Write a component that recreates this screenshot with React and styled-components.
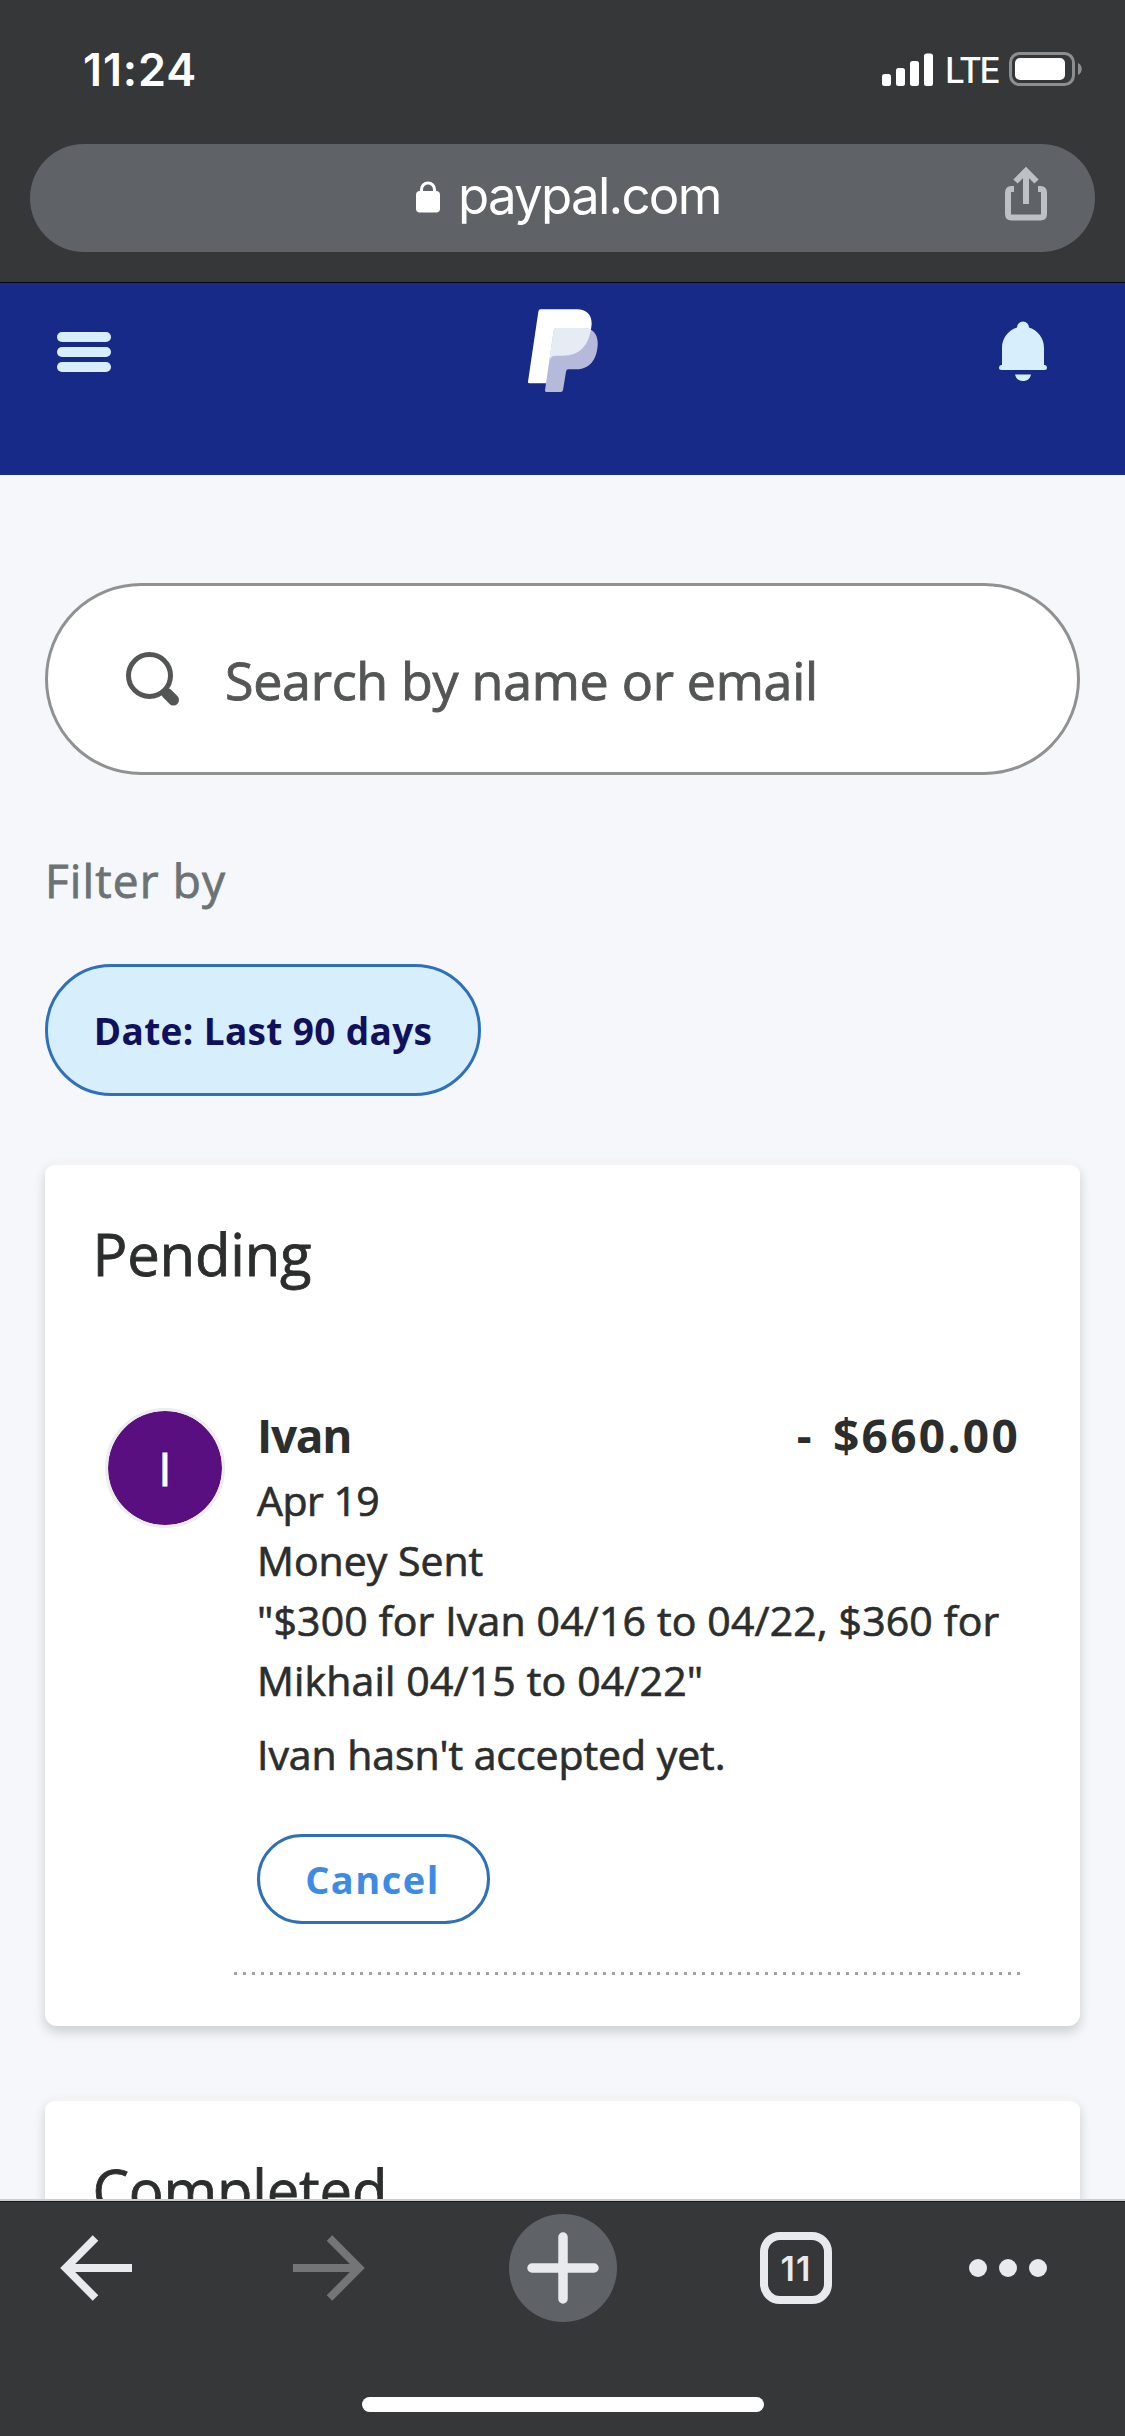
import React from "react";
import styled, { createGlobalStyle } from "styled-components";

const GlobalStyle = createGlobalStyle`
  * { box-sizing: border-box; }
  html, body { margin: 0; padding: 0; background: #363739; }
  button { font: inherit; cursor: pointer; }
  h2, p { margin: 0; font-weight: 400; }
  svg { display: block; flex: none; }
`;

const brandFont = `"Open Sans", "Noto Sans", sans-serif`;
const systemFont = `Inter, Roboto, sans-serif`;

const Screen = styled.div`
  width: 1125px;
  height: 2436px;
  display: flex;
  flex-direction: column;
  overflow: hidden;
  background: #f5f7fb;
  font-family: ${brandFont};
  color: #2c2e2d;
`;

const BrowserTop = styled.header`
  flex: none;
  height: 283px;
  background: #363739;
  border-bottom: 1px solid #05070f;
  font-family: ${systemFont};
  color: #fff;
`;

const StatusBar = styled.div`
  height: 138px;
  padding: 0 43px 0 83px;
  display: flex;
  align-items: center;
`;

const Clock = styled.span`
  margin-right: auto;
  font-size: 45px;
  font-weight: 600;
  letter-spacing: 0.9px;
`;

const Network = styled.span`
  width: 76px;
  padding: 2px 0 0 1px;
  text-align: center;
  font-size: 35px;
  font-weight: 500;
  letter-spacing: -2.4px;
`;

const AddressBar = styled.div`
  height: 108px;
  margin: 6px 30px 0;
  padding: 0 48px 0 386px;
  display: flex;
  align-items: flex-start;
  border-radius: 54px;
  background: #5f6267;

  svg:first-child { margin-top: 37px; }
  svg:last-child { margin: 23px 0 0 auto; }
`;

const Domain = styled.span`
  margin-left: 18px;
  font-size: 51px;
  line-height: 104px;
  letter-spacing: -1.75px;
`;

const SiteHeader = styled.div`
  flex: none;
  height: 192px;
  padding: 0 78px 56px 57px;
  display: flex;
  align-items: center;
  justify-content: space-between;
  background: #182a87;
`;

const Burger = styled.div`
  width: 54px;
  margin-top: 2px;
  display: grid;
  gap: 5px;

  i {
    height: 10px;
    border-radius: 5px;
    background: #d7effd;
  }
`;

const LogoSlot = styled.div`
  margin-left: 16px;
`;

const Main = styled.main`
  flex: 1;
  min-height: 0;
  overflow: hidden;
  padding: 108px 45px 0;
`;

const SearchField = styled.div`
  height: 192px;
  padding-left: 78px;
  display: flex;
  align-items: center;
  border: 3px solid #909191;
  border-radius: 96px;
  background: #fff;

  span {
    margin-left: 45px;
    padding-top: 1px;
    font-size: 52px;
    color: #545555;
    letter-spacing: -0.3px;
    -webkit-text-stroke: 0.9px #545555;
  }
`;

const FilterLabel = styled.p`
  margin-top: 75px;
  font-size: 46px;
  line-height: 60px;
  letter-spacing: 1.1px;
  color: #6c7374;
  -webkit-text-stroke: 0.8px #6c7374;
`;

const Chip = styled.button`
  display: flex;
  align-items: center;
  justify-content: center;
  width: 436px;
  height: 132px;
  margin-top: 54px;
  padding: 0;
  border: 3px solid #2e70b9;
  border-radius: 66px;
  background: #d7effd;
  font-size: 37px;
  font-weight: 700;
  letter-spacing: 0.35px;
  color: #11105c;
`;

const Card = styled.section`
  height: 864px;
  margin-top: ${(p) => p.$gap}px;
  padding: 49px 60px 0 0;
  border-top: 3px solid #f4f4f4;
  border-radius: 12px;
  background: #fff;
  box-shadow: 0 6px 12px rgba(0, 0, 0, 0.17);
`;

const CardTitle = styled.h2`
  padding-left: 47.5px;
  font-size: 58px;
  line-height: 80px;
  letter-spacing: -0.2px;
  -webkit-text-stroke: 0.8px #2c2e2d;
`;

const Payment = styled.article`
  margin-top: 111px;
  padding-left: 60px;
  display: flex;
  gap: 32px;
`;

const Avatar = styled.div`
  flex: none;
  width: 120px;
  height: 120px;
  margin-top: 3px;
  display: flex;
  align-items: center;
  justify-content: center;
  border: 3px solid #ecedee;
  border-radius: 50%;
  background: #5a0f80;
  background-clip: padding-box;
  font-size: 46px;
  line-height: 60px;
  color: #fff;
  -webkit-text-stroke: 1px #fff;
`;

const Details = styled.div`
  flex: 1;
`;

const Headline = styled.div`
  margin-bottom: 5px;
  display: flex;
  justify-content: space-between;
  font-size: 46px;
  line-height: 60px;
  font-weight: 700;
`;

const Name = styled.span`
  letter-spacing: -1.3px;
`;

const Amount = styled.span`
  display: flex;
  gap: 19px;
  letter-spacing: 2.3px;
`;

const Line = styled.p`
  margin-top: ${(p) => p.$top || 0}px;
  font-size: 41px;
  line-height: 60px;
  white-space: nowrap;
  letter-spacing: ${(p) => p.$tracking || 0}px;
  -webkit-text-stroke: 0.7px #2c2e2d;
`;

const CancelButton = styled.button`
  display: flex;
  align-items: center;
  justify-content: center;
  width: 233px;
  height: 90px;
  margin-top: 50px;
  padding: 0 2px 0 0;
  border: 3px solid #2e70b9;
  border-radius: 45px;
  background: #fff;
  font-size: 38px;
  font-weight: 700;
  letter-spacing: 1.5px;
  color: #3d8be3;
`;

const Divider = styled.div`
  width: 787px;
  height: 3px;
  margin: 48px 0 0 189px;
  background: repeating-linear-gradient(90deg, #9da2a4 0 3px, transparent 3px 9px);
`;

const BrowserBottom = styled.footer`
  flex: none;
  height: 237px;
  border-top: 2px solid #c9d0d2;
  background: #363739;
  font-family: ${systemFont};
`;

const Toolbar = styled.nav`
  height: 133px;
  border-top: 1px solid #101b1b;
  display: grid;
  grid-template-columns: 192px 274px 194px 272px 152px;
  align-items: center;
  justify-items: center;
`;

const NewTab = styled.div`
  width: 108px;
  height: 108px;
  display: flex;
  align-items: center;
  justify-content: center;
  border-radius: 50%;
  background: #5f6267;
`;

const TabCount = styled.div`
  width: 72px;
  height: 72px;
  display: flex;
  align-items: center;
  justify-content: center;
  border: 8px solid #e8eaed;
  border-radius: 20px;
  font-size: 34px;
  font-weight: 600;
  letter-spacing: 1px;
  color: #e8eaed;
`;

const HomeIndicator = styled.div`
  width: 402px;
  height: 15px;
  margin: 63px auto 0;
  border-radius: 8px;
  background: #fff;
`;

const Signal = () => (
  <svg width="51" height="33" viewBox="0 0 51 33" fill="#fff">
    <rect x="0" y="21" width="9" height="12" rx="2.5" />
    <rect x="14" y="15" width="9" height="18" rx="2.5" />
    <rect x="28" y="8" width="9" height="25" rx="2.5" />
    <rect x="42" y="0.5" width="9" height="32.5" rx="2.5" />
  </svg>
);

const Battery = () => (
  <svg width="73" height="34" viewBox="0 0 73 34">
    <rect x="1.5" y="1.5" width="63" height="31" rx="9" fill="none" stroke="#8d8e90" strokeWidth="3" />
    <rect x="6" y="6" width="50" height="22" rx="5" fill="#fff" />
    <path d="M69 11c5 2 5 10 0 12z" fill="#8d8e90" />
  </svg>
);

const Lock = () => (
  <svg width="24" height="32" viewBox="0 0 24 32">
    <path d="M5.5 12V8.500a6.500 6.500 0 0 1 13 0V12" fill="none" stroke="#fff" strokeWidth="3" />
    <rect y="10" width="24" height="21.500" rx="4" fill="#fff" />
  </svg>
);

const Share = () => (
  <svg width="42" height="54" viewBox="0 0 42 54" fill="none" stroke="#bdc1c6" strokeWidth="6">
    <path d="M9 22H6.500Q3 22 3 26V47Q3 50.500 6.500 50.500H35.500Q39 50.500 39 47V26Q39 22 35.500 22H33" />
    <path d="M21 37V6M10.500 14.500L21 4L31.500 14.500" />
  </svg>
);

const PayPalMark = () => (
  <svg width="70" height="84" viewBox="45 27 210 252">
    <defs>
      <clipPath id="bowl">
        <path d="M76 28H192C224 28 240 50 235 80C228 137 200 166 150 167H128Q115 167 112 176L60 180Z" />
      </clipPath>
    </defs>
    <path
      d="M83 28H192C224 28 240 50 235 80C228 137 200 166 150 167H122L103 250H49Q44 250 45 245L76 35Q77 28 83 28Z"
      fill="#fff"
    />
    <path
      d="M130 84H212C241 84 256 105 254 135C251 185 225 208 190 208H166Q160 208 159 215L150 270Q149 276 143 276H100Q95 276 96 271L122 92Q123 84 130 84Z"
      fill="#b6bada"
    />
    <path
      clipPath="url(#bowl)"
      d="M130 84H212C241 84 256 105 254 135C251 185 225 208 190 208H105L122 92Q123 84 130 84Z"
      fill="#e7ebf4"
    />
  </svg>
);

const Bell = () => (
  <svg width="48" height="60" viewBox="0 0 48 60" fill="#d7effd">
    <path d="M18 6.500A6 6 0 0 1 30 6.500C39 9.500 45 17 45 27V44H46Q48 44.500 48 46.500Q48 49 45.500 49H2.500Q0 49 0 46.500Q0 44.500 2 44H3V27C3 17 9 9.500 18 6.500Z" />
    <path d="M16 53.500H32C31 58 28 60 24 60S17 58 16 53.500Z" />
  </svg>
);

const SearchIcon = () => (
  <svg width="54" height="54" viewBox="0 0 54 54" fill="none" stroke="#545555">
    <circle cx="23.500" cy="23.500" r="21" strokeWidth="5" />
    <path d="M38 38.500L41 41.500" strokeWidth="9" />
    <path d="M41 41.500L47.500 48" strokeWidth="11" strokeLinecap="round" />
  </svg>
);

const Arrow = ({ color, flip }) => (
  <svg width="72" height="66" viewBox="0 0 72 66" fill="none" stroke={color} strokeWidth="7.800">
    <g transform={flip ? "translate(72 0) scale(-1 1)" : undefined}>
      <path d="M72 33H8M35.500 3L5.700 33L35.500 63" />
    </g>
  </svg>
);

const Plus = () => (
  <svg width="72" height="72" viewBox="0 0 72 72" stroke="#e8eaed" strokeWidth="9.500" strokeLinecap="round">
    <path d="M36 5V67M5 36H67" />
  </svg>
);

const Dots = () => (
  <svg width="78" height="18" viewBox="0 0 78 18" fill="#e8eaed">
    <circle cx="9" cy="9" r="9" />
    <circle cx="39" cy="9" r="9" />
    <circle cx="69" cy="9" r="9" />
  </svg>
);

export default function App() {
  return (
    <>
      <GlobalStyle />
      <Screen>
        <BrowserTop>
          <StatusBar>
            <Clock>11:24</Clock>
            <Signal />
            <Network>LTE</Network>
            <Battery />
          </StatusBar>
          <AddressBar>
            <Lock />
            <Domain>paypal.com</Domain>
            <Share />
          </AddressBar>
        </BrowserTop>

        <SiteHeader>
          <Burger>
            <i />
            <i />
            <i />
          </Burger>
          <LogoSlot>
            <PayPalMark />
          </LogoSlot>
          <Bell />
        </SiteHeader>

        <Main>
          <SearchField>
            <SearchIcon />
            <span>Search by name or email</span>
          </SearchField>
          <FilterLabel>Filter by</FilterLabel>
          <Chip>Date: Last 90 days</Chip>

          <Card $gap={66}>
            <CardTitle>Pending</CardTitle>
            <Payment>
              <Avatar>I</Avatar>
              <Details>
                <Headline>
                  <Name>Ivan</Name>
                  <Amount>
                    <span>-</span>
                    <span>$660.00</span>
                  </Amount>
                </Headline>
                <Line $tracking={-0.5}>Apr 19</Line>
                <Line>Money Sent</Line>
                <Line $tracking={0.16}>"$300 for Ivan 04/16 to 04/22, $360 for</Line>
                <Line $tracking={0.16}>Mikhail 04/15 to 04/22"</Line>
                <Line $top={14} $tracking={-0.06}>Ivan hasn't accepted yet.</Line>
                <CancelButton>Cancel</CancelButton>
              </Details>
            </Payment>
            <Divider />
          </Card>

          <Card $gap={72}>
            <CardTitle>Completed</CardTitle>
          </Card>
        </Main>

        <BrowserBottom>
          <Toolbar>
            <Arrow color="#e8eaed" />
            <Arrow color="#747577" flip />
            <NewTab>
              <Plus />
            </NewTab>
            <TabCount>11</TabCount>
            <Dots />
          </Toolbar>
          <HomeIndicator />
        </BrowserBottom>
      </Screen>
    </>
  );
}
